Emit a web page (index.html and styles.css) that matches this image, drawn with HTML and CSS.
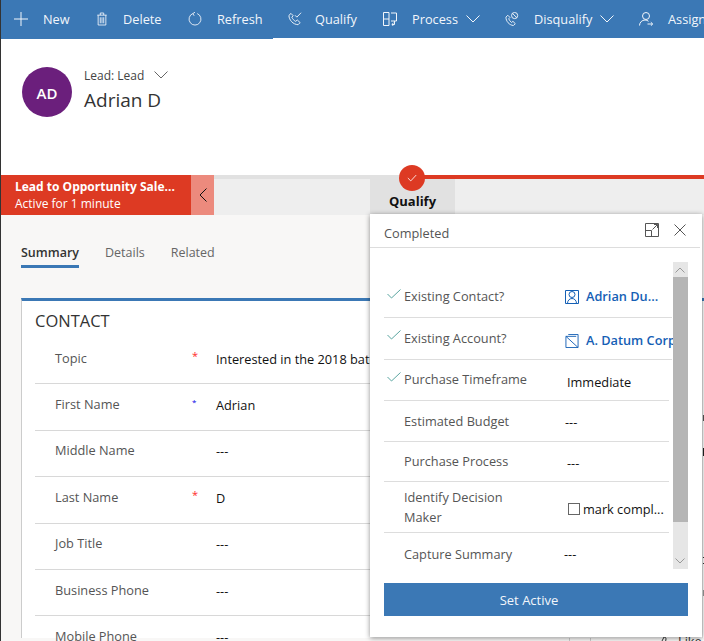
FILE: index.html
```html
<!DOCTYPE html>
<html lang="en">
<head>
    <meta charset="UTF-8">
    <meta name="viewport" content="width=device-width, initial-scale=1.0">
    <title>Lead: Adrian D</title>
    <link rel="stylesheet" href="styles.css">
</head>
<body>

    <!-- Command bar -->
    <div class="cmdbar">
        <div class="cmd cmd-new">
            <svg viewBox="0 0 14 14"><path d="M7 0v14M0 7h14"/></svg>
            <span>New</span>
        </div>
        <div class="cmd cmd-delete">
            <svg viewBox="0 0 14 16"><path d="M1.5 3.5h11M2.5 3.5v11.5h9V3.5M5 3.5V1h4v2.5M5 6v7M7 6v7M9 6v7"/></svg>
            <span>Delete</span>
        </div>
        <div class="cmd cmd-refresh">
            <svg viewBox="0 0 16 16"><path d="M5.500 1.800A6.800 6.800 0 1 0 10.500 1.800M8 .3 5.500 1.800 7 4.300"/></svg>
            <span>Refresh</span>
        </div>
        <div class="cmd cmd-qualify">
            <svg viewBox="0 0 15 15"><path d="M3.2 1.5 1 3.6c0 5 4.500 9.800 9.800 10l2.200-2.200-3-2.800-1.800 1.400C6.200 9 5 7.600 4.100 5.600l1.400-1.600zM7.500 3.500l2 2L14 .8"/></svg>
            <span>Qualify</span>
        </div>
        <div class="cmd cmd-process">
            <svg viewBox="0 0 14 14"><path d="M.5 .5h5.500v13H.5zM.5 7h5.500M8 1h5.500v8H8M11.500 9v3.500H9M10.500 11l-1.700 1.500 1.700 1.500"/></svg>
            <span>Process</span>
            <svg class="chev" viewBox="0 0 14 8"><path d="M.5 .5 7 7l6.500-6.500"/></svg>
        </div>
        <div class="cmd cmd-disqualify">
            <svg viewBox="0 0 15 15"><path d="M3 3.500 1 5.500c0 4.500 3.500 8.500 8 9l2-2-2.500-2.500-1.500 1.200C5.500 10 4.500 8.800 4 7.300l1.300-1.500zM7 3.800a3.300 3.300 0 1 0 6.600 0 3.300 3.300 0 1 0-6.600 0M8 1.500l4.600 4.600"/></svg>
            <span>Disqualify</span>
            <svg class="chev" viewBox="0 0 14 8"><path d="M.5 .5 7 7l6.500-6.500"/></svg>
        </div>
        <div class="cmd cmd-assign">
            <svg viewBox="0 0 14 14"><path d="M3.500 4a3.500 3.500 0 1 0 7 0 3.500 3.500 0 1 0-7 0M.5 13.500C.5 10.500 3 8 6 8c1.500 0 2.500.5 3.500 1.300M8.500 12h5M11.800 10.200 13.700 12l-1.900 1.800"/></svg>
            <span>Assign</span>
        </div>
    </div>

    <!-- Record header -->
    <div class="record">
        <div class="avatar">AD</div>
        <div class="record-info">
            <div class="record-type">
                Lead: Lead
                <svg viewBox="0 0 14 8"><path d="M.5 .5 7 7l6.500-6.500"/></svg>
            </div>
            <div class="record-name">Adrian D</div>
        </div>
    </div>

    <!-- Business process bar -->
    <div class="bpf">
        <div class="bpf-active">
            <div class="bpf-title">Lead to Opportunity Sale...</div>
            <div class="bpf-time">Active for 1 minute</div>
        </div>
        <div class="bpf-toggle">
            <svg viewBox="0 0 8 14"><path d="M7.500 .5 1 7l6.500 6.500"/></svg>
        </div>
        <div class="bpf-track">
            <div class="bpf-line"><div class="bpf-line-done"></div></div>
            <div class="bpf-stage">
                <div class="stage-dot">
                    <svg viewBox="0 0 12 9"><path d="M1 4.500 4.500 8 11 1"/></svg>
                </div>
                Qualify
            </div>
        </div>
    </div>

    <div class="main">
        <div class="tabs">
            <div class="tab tab-on">Summary</div>
            <div class="tab">Details</div>
            <div class="tab">Related</div>
        </div>

        <div class="card">
            <div class="fields">
                <h3>CONTACT</h3>
                <div class="field">
                    <div class="field-label">Topic</div>
                    <div class="mark">*</div>
                    <div class="field-value">Interested in the 2018 batch of products</div>
                </div>
                <div class="field">
                    <div class="field-label">First Name</div>
                    <div class="mark mark-blue">*</div>
                    <div class="field-value">Adrian</div>
                </div>
                <div class="field">
                    <div class="field-label">Middle Name</div>
                    <div class="mark"></div>
                    <div class="field-value">---</div>
                </div>
                <div class="field">
                    <div class="field-label">Last Name</div>
                    <div class="mark">*</div>
                    <div class="field-value">D</div>
                </div>
                <div class="field">
                    <div class="field-label">Job Title</div>
                    <div class="mark"></div>
                    <div class="field-value">---</div>
                </div>
                <div class="field">
                    <div class="field-label">Business Phone</div>
                    <div class="mark"></div>
                    <div class="field-value">---</div>
                </div>
                <div class="field">
                    <div class="field-label">Mobile Phone</div>
                    <div class="mark"></div>
                    <div class="field-value">---</div>
                </div>
            </div>
            <div class="side">
                <div class="side-row">
                    <div class="side-cell side-a"></div>
                    <div class="side-cell side-b"></div>
                    <svg class="like-icon" viewBox="0 0 15 15"><path d="M1 7h3v7H1zM4 7l3-6c1.500 0 2 1 2 2L8.500 6H14l-1.500 8H4"/></svg>
                    <div class="side-like">Like</div>
                </div>
                <div class="side-edge">
                    <div class="edge-mark edge-s"></div>
                    <div class="edge-mark edge-bar"></div>
                    <div class="edge-mark edge-dash"></div>
                    <div class="edge-mark edge-dash2"></div>
                    <div class="edge-mark edge-gray"></div>
                </div>
            </div>
        </div>
    </div>

    <!-- Stage flyout -->
    <div class="flyout">
        <div class="flyout-head">
            <span>Completed</span>
            <svg class="fly-icon" viewBox="0 0 14 14"><path d="M.5 .5h13v13H.5zM.5 7.500h6v6M7.500 6.500l5-5M9 1.500h3.500V5"/></svg>
            <svg class="fly-icon fly-close" viewBox="0 0 12 12"><path d="M.5 .5l11 11M11.500 .5l-11 11"/></svg>
        </div>
        <div class="flyout-body">
            <div class="steps">
                <div class="step step-1">
                    <svg class="tick" viewBox="0 0 14 10"><path d="M.5 5 4.500 9 13.500 .5"/></svg>
                    <div class="step-label">Existing Contact?</div>
                    <div class="step-value link">
                        <svg viewBox="0 0 14 14"><path d="M.5 .5h13v13H.5zM4 4.500a3 3 0 1 0 6 0 3 3 0 1 0-6 0M2.500 13.500c0-3 2-5 4.500-5s4.500 2 4.500 5"/></svg>
                        Adrian Du...
                    </div>
                </div>
                <div class="step step-2">
                    <svg class="tick" viewBox="0 0 14 10"><path d="M.5 5 4.500 9 13.500 .5"/></svg>
                    <div class="step-label">Existing Account?</div>
                    <div class="step-value link">
                        <svg viewBox="0 0 14 15"><path d="M.5 2.500h11M3 .5h10.500v14H.5v-12l13 12"/></svg>
                        A. Datum Corp
                    </div>
                </div>
                <div class="step step-3">
                    <svg class="tick" viewBox="0 0 14 10"><path d="M.5 5 4.500 9 13.500 .5"/></svg>
                    <div class="step-label">Purchase Timeframe</div>
                    <div class="step-value">Immediate</div>
                </div>
                <div class="step step-4">
                    <div class="step-label">Estimated Budget</div>
                    <div class="step-value">---</div>
                </div>
                <div class="step step-5">
                    <div class="step-label">Purchase Process</div>
                    <div class="step-value">---</div>
                </div>
                <div class="step step-6">
                    <div class="step-label">Identify Decision<br>Maker</div>
                    <div class="step-value"><span class="checkbox"></span>mark compl...</div>
                </div>
                <div class="step step-7">
                    <div class="step-label">Capture Summary</div>
                    <div class="step-value">---</div>
                </div>
            </div>
            <div class="scrollbar">
                <div class="scroll-btn">
                    <svg viewBox="0 0 10 6"><path d="M.5 5.500 5 1l4.500 4.500"/></svg>
                </div>
                <div class="scroll-thumb"></div>
                <div class="scroll-rest">
                    <svg viewBox="0 0 10 6"><path d="M.5 .5 5 5l4.500-4.500"/></svg>
                </div>
            </div>
        </div>
        <button class="set-active">Set Active</button>
    </div>

</body>
</html>
```

FILE: styles.css
```css
* {
    box-sizing: border-box;
}

html, body {
    height: 641px;
}

body {
    margin: 0;
    overflow: hidden;
    position: relative;
    border-left: 1px solid #333;
    font-family: "Open Sans", "Noto Sans", sans-serif;
    font-size: 12.750px;
    color: #333;
    background: #fff;
}

svg {
    fill: none;
    stroke: currentColor;
    stroke-width: 1;
    display: block;
    flex: none;
}

/* Command bar */
.cmdbar {
    display: flex;
    height: 38px;
    background: #3b78b5;
    color: #f2f6fb;
    white-space: nowrap;
}

.cmd {
    display: flex;
    align-items: center;
    flex: none;
    height: 38px;
}

.cmd svg {
    width: 14px;
    height: 14px;
}

.cmd .chev {
    width: 14px;
    height: 8px;
    margin-left: 8px;
}

.cmd-new { width: 81px; padding-left: 13px; }
.cmd-delete { width: 92px; padding-left: 14px; }
.cmd-refresh { width: 99px; padding-left: 14px; }
.cmd-qualify { width: 97px; padding-left: 15px; }
.cmd-process { width: 122px; padding-left: 13px; }
.cmd-disqualify { width: 134px; padding-left: 13px; }
.cmd-assign { padding-left: 13px; }

.cmd span {
    margin-left: 15px;
}

.cmd-qualify span {
    margin-left: 13px;
}

.cmd-new, .cmd-delete, .cmd-refresh {
    height: 39px;
    padding-bottom: 1px;
    background: #3b78b5;
}

.cmd-delete svg {
    height: 16px;
    width: 12px;
}

/* Record header */
.record {
    display: flex;
    height: 137px;
    padding: 29px 0 0 21px;
}

.avatar {
    width: 50px;
    height: 50px;
    padding-top: 1px;
    border-radius: 50%;
    background: #6b1f7c;
    color: #fff;
    font-weight: 600;
    font-size: 15px;
    display: flex;
    align-items: center;
    justify-content: center;
}

.record-info {
    margin-left: 12px;
}

.record-type {
    display: flex;
    align-items: center;
    font-size: 12px;
    line-height: 18px;
    color: #444;
}

.record-type svg {
    width: 14px;
    height: 8px;
    margin: 0 0 2px 10px;
    color: #666;
}

.record-name {
    font-size: 19px;
    line-height: 28px;
    padding-top: 1px;
}

/* Process bar */
.bpf {
    display: flex;
    height: 40px;
}

.bpf-active {
    width: 190px;
    padding: 3px 0 0 14px;
    background: #dd3a23;
    color: #fff;
    font-size: 12px;
    line-height: 17px;
}

.bpf-title {
    font-weight: 700;
}

.bpf-toggle {
    width: 23px;
    background: #ec8a7d;
    color: #111;
    display: flex;
    align-items: center;
    justify-content: center;
}

.bpf-toggle svg {
    width: 8px;
    height: 14px;
}

.bpf-track {
    flex: 1;
    background: #eeeeee;
}

.bpf-line {
    height: 4px;
    background: #e1e1e1;
    padding-left: 198px;
}

.bpf-line-done {
    height: 4px;
    background: #dd3a23;
}

.bpf-stage {
    position: relative;
    width: 85px;
    height: 35px;
    margin-left: 156px;
    padding-top: 11px;
    background: #e1e1e1;
    color: #111;
    font-size: 13px;
    font-weight: 700;
    line-height: 22px;
    text-align: center;
}

.stage-dot {
    position: absolute;
    top: -14px;
    left: 29px;
    width: 26px;
    height: 26px;
    border-radius: 50%;
    background: #dd3a23;
    color: #fff;
    display: flex;
    align-items: center;
    justify-content: center;
}

.stage-dot svg {
    width: 10px;
    height: 8px;
}

/* Main area */
.main {
    background: #f8f7f6;
    padding: 26px 0 0 20px;
    height: 426px;
}

.tabs {
    display: flex;
    height: 27px;
}

.tab {
    margin-right: 26px;
    color: #666;
    font-size: 12.500px;
    line-height: 23px;
}

.tab-on {
    color: #333;
    font-weight: 600;
    border-bottom: 3px solid #3b78b5;
}

.card {
    display: flex;
    width: 690px;
    height: 340px;
    margin-top: 30px;
    background: #fff;
    border-top: 3px solid #3b78b5;
    border-left: 1px solid #ccc;
}

.fields {
    width: 547px;
    padding-left: 13px;
    flex: none;
}

.fields h3 {
    margin: 0;
    height: 37px;
    padding-top: 7px;
    font-size: 16.500px;
    font-weight: 400;
    line-height: 26px;
}

.field {
    display: flex;
    height: 46.400px;
    padding-top: 10.700px;
    border-bottom: 1px solid #d8d8d8;
}

.field-label {
    width: 157px;
    padding-left: 20px;
    line-height: 18px;
    color: #555;
}

.mark {
    width: 24px;
    color: #ff2b2b;
    font-size: 11px;
    line-height: 14px;
}

.mark-blue {
    color: #0000e6;
    font-size: 8px;
}

.field-value {
    padding-top: 1px;
    color: #111;
    white-space: nowrap;
    line-height: 18px;
}

.side {
    display: flex;
    flex: none;
    width: 142px;
}

.side-row {
    display: flex;
    width: 133px;
    padding-top: 331px;
    flex: none;
}

.side-cell {
    height: 20px;
    margin-top: 6px;
    border-left: 1px solid #ccc;
}

.side-a { width: 21px; }
.side-b { width: 34px; }

.like-icon {
    width: 15px;
    height: 15px;
    margin: 4px 0 0 33px;
}

.side-like {
    margin-left: 6px;
    line-height: 18px;
}

.side-edge {
    width: 2px;
    flex: none;
    border-left: 1px solid #e6e6e6;
}

.edge-mark {
    height: 6px;
    background: #555;
}

.edge-s { margin-top: 114px; }
.edge-bar { margin-top: 27px; height: 8px; background: #222; }
.edge-dash { margin-top: 101px; height: 1px; background: #333; }
.edge-dash2 { margin-top: 5px; height: 1px; background: #333; }
.edge-gray { margin-top: 26px; background: #999; }

/* Flyout */
.flyout {
    position: absolute;
    top: 214px;
    left: 369px;
    width: 332px;
    height: 423px;
    background: #fff;
    box-shadow: 0 1px 5px rgba(0, 0, 0, 0.45);
}

.flyout-head {
    display: flex;
    align-items: center;
    height: 34px;
    padding: 0 14px 0 14px;
    border-bottom: 1px solid #ddd;
    margin-right: 2px;
    color: #555;
}

.flyout-head span {
    flex: 1;
    padding-top: 5px;
}

.fly-icon {
    width: 14px;
    height: 14px;
    margin-bottom: 2px;
}

.fly-close {
    width: 12px;
    height: 12px;
    margin-left: 15px;
}

.flyout-body {
    display: flex;
    height: 307px;
    margin: 14px 0 0 14px;
    width: 304px;
}

.steps {
    width: 289px;
    height: 307px;
    padding-top: 15px;
    overflow: hidden;
    flex: none;
}

.step {
    display: flex;
    width: 285px;
    height: 41px;
    padding-top: 10px;
    border-bottom: 1px solid #ddd;
    position: relative;
    color: #555;
    line-height: 18px;
}

.step-1 { width: 288px; padding-top: 9px; }
.step-2 { width: 288px; height: 42px; }
.step-3 { padding-top: 9px; }
.step-5 { height: 40px; padding-top: 9px; }
.step-6 { height: 51px; padding-top: 5px; }
.step-7 { padding-top: 11px; border-bottom: 0; }

.tick {
    width: 14px;
    height: 10px;
    margin-left: 3px;
    color: #5aa5a0;
    position: absolute;
    top: 12px;
}

.step-label {
    width: 161px;
    margin-left: 20px;
    flex: none;
    line-height: 20px;
}

.step-value {
    display: flex;
    align-items: center;
    color: #111;
    white-space: nowrap;
    height: 20px;
}

.step-1 .step-value { margin-top: 0; }
.step-2 .step-value { margin-top: 2px; }
.step-3 .step-value { margin-top: 3px; padding-left: 2px; }
.step-4 .step-value { margin-top: 1px; }
.step-5 .step-value { margin-top: 2px; padding-left: 2px; }
.step-6 .step-value { margin-top: 12px; padding-left: 3px; }
.step-7 .step-value { margin-left: -1px; }

.step-value.link {
    color: #1560b5;
    font-weight: 600;
}

.link svg {
    width: 14px;
    height: 14px;
    margin: 2px 7px 0 0;
}

.checkbox {
    width: 12px;
    height: 12px;
    border: 1px solid #666;
    margin-right: 3px;
}

.scrollbar {
    width: 15px;
    flex: none;
    color: #999;
    display: flex;
    flex-direction: column;
}

.scroll-btn {
    height: 15px;
    background: #e6e6e6;
    padding: 5px 2px 0;
}

.scroll-btn svg, .scroll-rest svg {
    width: 10px;
    height: 6px;
}

.scroll-thumb {
    height: 245px;
    background: #b5b5b5;
}

.scroll-rest {
    height: 47px;
    background: #e6e6e6;
    padding: 36px 2px 0;
}

.set-active {
    display: block;
    width: 304px;
    height: 33px;
    margin: 14px 0 0 14px;
    padding: 0 14px 0 0;
    background: #3b78b5;
    color: #f2f6fb;
    border: none;
    font-family: inherit;
    font-size: 13px;
}
```
